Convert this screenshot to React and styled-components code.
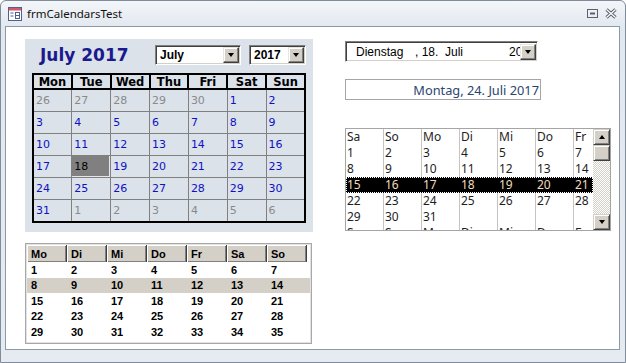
import React from 'react'
import styled, {createGlobalStyle} from 'styled-components'

const GlobalStyle = createGlobalStyle`
	html, body {
		margin: 0;
		padding: 0;
		background: #fff;
	}
	body {
		font-family: "Liberation Sans", Arial, sans-serif;
	}
`

const Window = styled.div`
	width: 626px;
	height: 363px;
	box-sizing: border-box;
	border: 1px solid #7f8c9b;
	border-radius: 6px 6px 0 0;
	background: linear-gradient(#f4f6f9, #e2e8ef 26px, #e6ebf1);
	display: flex;
	flex-direction: column;
	overflow: hidden;
`

const TitleBar = styled.div`
	height: 25px;
	flex-shrink: 0;
	display: flex;
	align-items: center;
	gap: 5px;
	padding: 0 8px 0 7px;
	font-family: "Noto Sans", "Open Sans", sans-serif;
	font-size: 11.5px;
	color: #111;
`

const TitleText = styled.span`
	flex: 1;
`

const TitleButtons = styled.div`
	display: flex;
	align-items: center;
	gap: 7px;
`

const Content = styled.div`
	flex: 1;
	margin: 0 5px 12px 4px;
	background: #fff;
	border: 1px solid #8c99a8;
	display: flex;
	gap: 32px;
	padding: 12px 0 0 19px;
`

const LeftColumn = styled.div`
	display: flex;
	flex-direction: column;
	gap: 11px;
`

const RightColumn = styled.div`
	display: flex;
	flex-direction: column;
	padding-top: 2px;
`

/* ---------- big calendar ---------- */

const CalPanel = styled.div`
	width: 288px;
	height: 193px;
	box-sizing: border-box;
	background: #dbe2ea;
	padding: 6px 7px 0 7px;
`

const CalHeader = styled.div`
	display: flex;
	align-items: center;
	height: 20px;
	margin-bottom: 8px;
`

const MonthTitle = styled.div`
	width: 123px;
	box-sizing: border-box;
	padding-left: 8px;
	font-family: "DejaVu Sans", Verdana, sans-serif;
	font-weight: bold;
	font-size: 17px;
	color: #1a1a8e;
	white-space: nowrap;
`

const Combo = styled.div`
	width: ${p => p.$width}px;
	height: ${p => p.$height || 20}px;
	margin-left: ${p => p.$gap || 0}px;
	box-sizing: border-box;
	display: flex;
	align-items: center;
	background: #fff;
	border: 1px solid;
	border-color: #808080 #fff #fff #808080;
	box-shadow: inset 1px 1px #404040, inset -1px -1px #d4d0c8;
	padding: 1px;
	overflow: hidden;
`

const ComboText = styled.div`
	flex: 1;
	padding-left: 3px;
	font-family: "Liberation Sans", Arial, sans-serif;
	font-weight: bold;
	font-size: 12px;
	color: #000;
	white-space: nowrap;
	overflow: hidden;
`

const DropButton = styled.div`
	width: 16px;
	height: 16px;
	flex-shrink: 0;
	box-sizing: border-box;
	background: #d4d0c8;
	border: 1px solid;
	border-color: #e8e6e2 #404040 #404040 #e8e6e2;
	box-shadow: inset -1px -1px #808080, inset 1px 1px #fff;
	display: flex;
	align-items: center;
	justify-content: center;
`

const Arrow = styled.span`
	width: 0;
	height: 0;
	border-left: 3.5px solid transparent;
	border-right: 3.5px solid transparent;
	${p => p.$up
		? 'border-bottom: 4px solid #000;'
		: 'border-top: 4px solid #000;'}
`

const MonthTable = styled.table`
	width: 274px;
	border-collapse: collapse;
	border: 2px solid #000;
	table-layout: fixed;
`

const DayHead = styled.th`
	height: 13px;
	padding: 0;
	border: 2px solid #000;
	font-family: "DejaVu Sans", Verdana, sans-serif;
	font-weight: bold;
	font-size: 11.5px;
	text-align: center;
	color: #000;
	line-height: 12px;
`

const DayCell = styled.td`
	height: 21px;
	padding: 0 0 0 2px;
	border: 1px solid #808080;
	font-family: "DejaVu Sans", Verdana, sans-serif;
	font-size: 11px;
	color: ${p => (p.$muted ? '#8a8a8a' : p.$selected ? '#000' : '#1010c4')};
	background: ${p => (p.$selected ? '#808080' : 'transparent')};
	${p => p.$selected && 'box-shadow: inset -1px -1px #e6e6e6;'}
	vertical-align: middle;
`

/* ---------- small german calendar ---------- */

const GridFrame = styled.div`
	width: 287px;
	height: 101px;
	box-sizing: border-box;
	border: 1px solid #a8a8a8;
	box-shadow: inset 0 0 0 1px #e2e2e2;
	padding: 1px;
	overflow: hidden;
	font-family: "Liberation Sans", Arial, sans-serif;
	font-weight: bold;
	font-size: 11px;
	color: #000;
`

const GridRow = styled.div`
	display: flex;
	height: ${p => (p.$head ? 17 : 15.5)}px;
	align-items: center;
	background: ${p => (p.$shade ? '#d4d0c8' : 'transparent')};
`

const GridHead = styled.div`
	width: 40px;
	height: 17px;
	box-sizing: border-box;
	padding-left: 4px;
	display: flex;
	align-items: center;
	background: #d4d0c8;
	border-right: 1px solid #404040;
	box-shadow: inset 1px 1px #fff, inset -1px -1px #808080;
`

const GridCell = styled.div`
	width: 40px;
	box-sizing: border-box;
	padding-left: 4px;
`

/* ---------- right side ---------- */

const DateFields = styled.div`
	flex: 1;
	display: flex;
	padding-left: 9px;
	overflow: hidden;
	white-space: nowrap;
	font-family: "Liberation Sans", Arial, sans-serif;
	font-size: 12px;
	color: #000;
`

const DateField = styled.span`
	width: ${p => p.$w}px;
	flex-shrink: 0;
`

const TextBox = styled.div`
	width: 196px;
	height: 21px;
	margin-top: 17px;
	box-sizing: border-box;
	border: 1px solid #a5a5a5;
	display: flex;
	align-items: center;
	justify-content: flex-end;
	padding-right: 1px;
	font-family: "Noto Sans", "Open Sans", sans-serif;
	font-size: 12.8px;
	color: #2b4670;
	white-space: nowrap;
`

const ListBox = styled.div`
	width: 266px;
	height: 103px;
	margin-top: 28px;
	box-sizing: border-box;
	border: 1px solid #a5a5a5;
	display: flex;
	overflow: hidden;
`

const ListGrid = styled.div`
	width: 247px;
	overflow: hidden;
	font-family: "Noto Sans", "Open Sans", sans-serif;
	font-size: 12px;
	color: #1e1e1e;
`

const ListRow = styled.div`
	display: flex;
	height: 16px;
	align-items: center;
	background: ${p => (p.$selected ? '#000' : 'transparent')};
	color: ${p => (p.$selected ? '#f2dcbc' : 'inherit')};
	${p => p.$selected && 'outline: 1px dotted #fff; outline-offset: -1px;'}
`

const ListCell = styled.div`
	width: 38px;
	height: 16px;
	line-height: 16px;
	flex-shrink: 0;
	box-sizing: border-box;
	padding-left: 1px;
	border-right: 1px solid ${p => (p.$selected ? '#000' : '#c4c4c4')};
`

const ScrollBar = styled.div`
	width: 17px;
	display: flex;
	flex-direction: column;
	background: repeating-conic-gradient(#d4d0c8 0 25%, #fff 0 50%) 0 0 / 2px 2px;
`

const ScrollPart = styled.div`
	height: 16px;
	flex-shrink: 0;
	box-sizing: border-box;
	background: #d4d0c8;
	border: 1px solid;
	border-color: #d4d0c8 #404040 #404040 #d4d0c8;
	box-shadow: inset 1px 1px #fff, inset -1px -1px #808080;
	display: flex;
	align-items: center;
	justify-content: center;
`

const ScrollTrack = styled.div`
	flex: 1;
`

const bigWeeks = [
	[[26, 1], [27, 1], [28, 1], [29, 1], [30, 1], [1], [2]],
	[[3], [4], [5], [6], [7], [8], [9]],
	[[10], [11], [12], [13], [14], [15], [16]],
	[[17], [18, 0, 1], [19], [20], [21], [22], [23]],
	[[24], [25], [26], [27], [28], [29], [30]],
	[[31], [1, 1], [2, 1], [3, 1], [4, 1], [5, 1], [6, 1]],
]

const deDays = ['Mo', 'Di', 'Mi', 'Do', 'Fr', 'Sa', 'So']
const listDays = ['Sa', 'So', 'Mo', 'Di', 'Mi', 'Do', 'Fr']

const range = (from, n) => Array.from({length: n}, (_, i) => from + i)

const FormIcon = () => (
	<svg width="14" height="14" viewBox="0 0 14 14">
		<rect x="0.5" y="0.5" width="13" height="13" fill="#fff" stroke="#4f5f8f" />
		<rect x="1" y="1" width="12" height="2.5" fill="#d5556f" />
		<rect x="2.5" y="5.5" width="3" height="1" fill="#4f5f8f" />
		<rect x="2.5" y="8.5" width="3" height="1" fill="#4f5f8f" />
		<rect x="7.5" y="5.5" width="4" height="6" fill="none" stroke="#4f5f8f" />
		<rect x="8" y="8" width="3" height="1" fill="#4f5f8f" />
	</svg>
)

const RestoreIcon = () => (
	<svg width="11" height="9" viewBox="0 0 11 9">
		<rect x="0.5" y="0.5" width="10" height="8" fill="none" stroke="#5a6270" />
		<rect x="3" y="3.5" width="5" height="2" fill="#5a6270" />
	</svg>
)

const CloseIcon = () => (
	<svg width="12" height="11" viewBox="0 0 12 11">
		<path d="M1.5 1.5 L10.5 9.5 M10.5 1.5 L1.5 9.5" stroke="#5a6270" strokeWidth="3.2" />
		<path d="M1.5 1.5 L10.5 9.5 M10.5 1.5 L1.5 9.5" stroke="#fff" strokeWidth="1.2" />
	</svg>
)

const App = () => {
	return (
		<>
			<GlobalStyle />
			<Window>
				<TitleBar>
					<FormIcon />
					<TitleText>frmCalendarsTest</TitleText>
					<TitleButtons>
						<RestoreIcon />
						<CloseIcon />
					</TitleButtons>
				</TitleBar>
				<Content>
					<LeftColumn>
						<CalPanel>
							<CalHeader>
								<MonthTitle>July 2017</MonthTitle>
								<Combo $width={86}>
									<ComboText>July</ComboText>
									<DropButton><Arrow /></DropButton>
								</Combo>
								<Combo $width={57} $gap={8}>
									<ComboText>2017</ComboText>
									<DropButton><Arrow /></DropButton>
								</Combo>
							</CalHeader>
							<MonthTable>
								<thead>
									<tr>
										{['Mon', 'Tue', 'Wed', 'Thu', 'Fri', 'Sat', 'Sun'].map(d => (
											<DayHead key={d}>{d}</DayHead>
										))}
									</tr>
								</thead>
								<tbody>
									{bigWeeks.map((week, i) => (
										<tr key={i}>
											{week.map(([n, muted, sel], j) => (
												<DayCell key={j} $muted={!!muted} $selected={!!sel}>{n}</DayCell>
											))}
										</tr>
									))}
								</tbody>
							</MonthTable>
						</CalPanel>

						<GridFrame>
							<GridRow $head>
								{deDays.map(d => <GridHead key={d}>{d}</GridHead>)}
							</GridRow>
							{[1, 8, 15, 22, 29].map(start => (
								<GridRow key={start} $shade={start === 8}>
									{range(start, 7).map(n => <GridCell key={n}>{n}</GridCell>)}
								</GridRow>
							))}
						</GridFrame>
					</LeftColumn>

					<RightColumn>
						<Combo $width={193} $height={21}>
							<DateFields>
								<DateField $w={59}>Dienstag</DateField>
								<DateField $w={30}>, 18.</DateField>
								<DateField $w={64}>Juli</DateField>
								<DateField $w={40}>2017</DateField>
							</DateFields>
							<DropButton><Arrow /></DropButton>
						</Combo>

						<TextBox>Montag, 24. Juli 2017</TextBox>

						<ListBox>
							<ListGrid>
								<ListRow>
									{listDays.map(d => <ListCell key={d}>{d}</ListCell>)}
								</ListRow>
								{[1, 8, 15, 22, 29].map(start => (
									<ListRow key={start} $selected={start === 15}>
										{range(start, 7).map(n => (
											<ListCell key={n} $selected={start === 15}>{n <= 31 ? n : ''}</ListCell>
										))}
									</ListRow>
								))}
								<ListRow>
									{listDays.map(d => <ListCell key={d}>{d}</ListCell>)}
								</ListRow>
							</ListGrid>
							<ScrollBar>
								<ScrollPart><Arrow $up /></ScrollPart>
								<ScrollPart />
								<ScrollTrack />
								<ScrollPart><Arrow /></ScrollPart>
							</ScrollBar>
						</ListBox>
					</RightColumn>
				</Content>
			</Window>
		</>
	)
}

export default App
